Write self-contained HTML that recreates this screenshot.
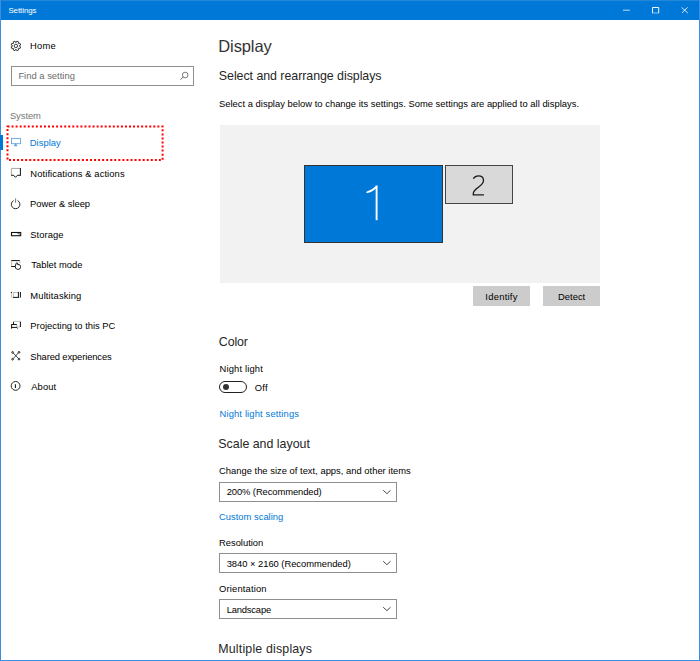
<!DOCTYPE html>
<html><head><meta charset="utf-8">
<style>
*{margin:0;padding:0;box-sizing:border-box}
html,body{width:700px;height:661px;overflow:hidden;background:#fff}
body{position:relative;font-family:"Liberation Sans",sans-serif;color:#000}
.t{position:absolute;white-space:nowrap;line-height:1;font-size:9.4px}
.h2{font-size:12.4px;color:#262626}
.lnk{color:#0078d7}
.abs{position:absolute}
#win{position:absolute;left:0;top:0;width:700px;height:661px;border:1px solid #3d8ee0;border-top:none}
#title{position:absolute;left:0;top:0;width:700px;height:20px;background:#0078d7;border-top:1px solid #2487d8}
.dd{position:absolute;left:219px;width:178px;height:20px;border:1px solid #8f8f8f}
.btn{position:absolute;top:286px;width:57px;height:20px;background:#cccccc}
svg{position:absolute;overflow:visible}
</style></head><body>
<div id="title"></div>
<div id="win"></div>
<div id="ttl" class="t" style="left:8.4px;top:6.8px;font-size:7.9px;letter-spacing:-0.05px;color:#fff">Settings</div>
<!-- window controls -->
<svg style="left:0;top:0" width="700" height="20">
  <line x1="623" y1="10.2" x2="629.8" y2="10.2" stroke="#c4def6" stroke-width="1"/>
  <path d="M652.5 13.2 V7.5 H658.7 V13.2" fill="none" stroke="#fff" stroke-width="0.95"/>
  <path d="M652.5 13 H658.7" fill="none" stroke="#9cc6ef" stroke-width="0.9"/>
  <path d="M681.6 7.4 L687.8 13 M687.6 7.4 L682 12.8" stroke="#eef6fd" stroke-width="0.9"/>
</svg>

<!-- sidebar -->
<svg style="left:0;top:0" width="200" height="400" viewBox="0 0 200 400">
  <path d="M16.19 42.41 L16.83 41.14 L18.61 41.88 L18.16 43.23 L18.57 43.64 L19.92 43.19 L20.66 44.97 L19.39 45.61 L19.39 46.19 L20.66 46.83 L19.92 48.61 L18.57 48.16 L18.16 48.57 L18.61 49.92 L16.83 50.66 L16.19 49.39 L15.61 49.39 L14.97 50.66 L13.19 49.92 L13.64 48.57 L13.23 48.16 L11.88 48.61 L11.14 46.83 L12.41 46.19 L12.41 45.61 L11.14 44.97 L11.88 43.19 L13.23 43.64 L13.64 43.23 L13.19 41.88 L14.97 41.14 L15.61 42.41 Z" fill="none" stroke="#222" stroke-width="0.9"/>
  <circle cx="15.9" cy="45.9" r="1.7" fill="none" stroke="#222" stroke-width="0.9"/>
  <!-- search -->
  <circle cx="185.2" cy="75" r="2.8" fill="none" stroke="#6a6a6a" stroke-width="0.9"/>
  <path d="M183.2 77 L180.4 79.7" stroke="#6a6a6a" stroke-width="1"/>
  <!-- red dotted box -->
  <rect x="7.5" y="126.5" width="155.1" height="33.5" fill="none" stroke="#ff0000" stroke-width="2" stroke-dasharray="2 2.05"/>
  <!-- display icon -->
  <g fill="none" stroke="#5c9fe2" stroke-width="0.85">
    <rect x="11.5" y="138.4" width="9" height="5.3"/>
    <path d="M15.6 143.8 L14.2 145.8 H17 Z" fill="#5c9fe2"/>
  </g>
  <g fill="none" stroke="#111" stroke-width="0.9">
    <path d="M11.4 168.4 H20.2 M11.4 168.6 V175" stroke="#9a9a9a" stroke-width="0.9"/>
    <path d="M20.4 168 V175.6 M11.1 175.3 H13.7 L15.5 177.3 L17.4 175.3 H20.6" stroke-width="1"/>
    <path d="M13.6 200.6 A4.3 4.3 0 1 0 17.6 200.6"/>
    <path d="M15.6 198.4 V202.8" stroke="#777" stroke-width="1"/>
    <rect x="11.5" y="232.5" width="9.2" height="3.2" stroke-width="1.1"/>
    <path d="M17.5 233.4 L20 234.2" stroke-width="0.7"/>
    <path d="M11.2 260.6 H19.8 M11.2 266.5 H15.3" stroke-width="1"/>
    <path d="M11.6 260.8 V266.2 M19.9 260.8 V263.4" stroke="#b0b0b0" stroke-width="0.8"/>
    <path d="M15.3 266.5 L16.1 263.3 Q16.8 262.5 17.6 263.1 L17.7 264.6 L19.2 264.6 Q20.5 264.9 20.5 266.4 V267.6 Q20.2 269.4 18.1 269.4 Q16.3 269.4 15.5 268 Z" stroke-width="0.95"/>
    <path d="M11.4 292.6 V297.8 M13.3 292.5 H18.3 M13.4 292.6 V297.2" stroke="#b8b8b8" stroke-width="0.9"/>
    <path d="M11.4 291.9 V293 M18.4 291.9 V297.6 M12.9 297.4 H18.9 M20.4 292 V297.6" stroke-width="1"/>
    <path d="M13.5 321.4 H20.5 M16.8 324.5 V327.4 M17 326.9 H20.4" stroke="#b5b5b5" stroke-width="0.9"/>
    <path d="M20.4 321.7 V327 M13.5 321.9 V324.4 M11.3 324.5 H16.8 M11.3 327.4 H16.9 M11.6 324.5 V328.7 M16.8 327.4 L17.6 328.6" stroke-width="1"/>
    <path d="M13.2 353 L18.4 358.4 M18.4 352.9 L13.2 358.6" stroke-width="0.8"/>
    <circle cx="12.6" cy="352.4" r="0.85"/>
    <circle cx="19" cy="352.3" r="0.85"/>
    <circle cx="12.6" cy="359.2" r="0.85"/>
    <circle cx="19" cy="359.1" r="0.85"/>
    <circle cx="15.6" cy="385.9" r="4.4"/>
    <path d="M15.4 384.3 V388" stroke-width="1.05"/>
  </g>
</svg>

<div id="home" class="t" style="left:29.98px;top:41.15px;letter-spacing:0.267px">Home</div>
<div class="abs" style="left:11px;top:66px;width:183px;height:20px;border:1px solid #8f8f8f"></div>
<div id="find" class="t" style="left:18.39px;top:71.14px;color:#6b6b6b;letter-spacing:0.018px">Find a setting</div>
<div id="system" class="t" style="left:9.91px;top:111.45px;color:#767676;letter-spacing:-0.048px">System</div>
<div class="abs" style="left:0;top:135px;width:3px;height:15px;background:#0078d7"></div>
<div id="navdisplay" class="t lnk" style="left:29.78px;top:137.70px;letter-spacing:0.040px">Display</div>
<div id="notif" class="t" style="left:30.35px;top:169.36px;letter-spacing:0.091px">Notifications &amp; actions</div>
<div id="power" class="t" style="left:30.08px;top:199.25px;letter-spacing:-0.040px">Power &amp; sleep</div>
<div id="storage" class="t" style="left:30.28px;top:230.45px;letter-spacing:0.067px">Storage</div>
<div id="tablet" class="t" style="left:31.20px;top:260.30px;letter-spacing:0.032px">Tablet mode</div>
<div id="multi" class="t" style="left:30.36px;top:290.66px;letter-spacing:0.131px">Multitasking</div>
<div id="proj" class="t" style="left:30.36px;top:321.48px;letter-spacing:0.004px">Projecting to this PC</div>
<div id="shared" class="t" style="left:30.36px;top:351.93px;letter-spacing:-0.122px">Shared experiences</div>
<div id="about" class="t" style="left:31.20px;top:381.54px;letter-spacing:0.120px">About</div>

<!-- main -->
<div id="h1" class="t" style="left:218.32px;top:38.03px;font-size:16.5px;letter-spacing:-0.120px;color:#333">Display</div>
<div id="sra" class="t h2" style="left:218.83px;top:70.05px;letter-spacing:-0.043px">Select and rearrange displays</div>
<div id="seldesc" class="t" style="left:218.98px;top:98.94px;letter-spacing:0.017px">Select a display below to change its settings. Some settings are applied to all displays.</div>
<div class="abs" style="left:220px;top:125px;width:380px;height:158px;background:#f2f2f2"></div>
<div class="abs" style="left:304px;top:165px;width:139px;height:78px;background:#0078d7;border:1px solid #333"></div>
<div class="abs" style="left:445px;top:165px;width:68px;height:39px;background:#d9d9d9;border:1px solid #444"></div>
<div class="btn" style="left:473px"></div>
<div class="btn" style="left:543px"></div>
<div id="identify" class="t" style="left:485.30px;top:292.00px;letter-spacing:0.274px">Identify</div>
<div id="detect" class="t" style="left:557.98px;top:291.65px;letter-spacing:0.032px">Detect</div>

<div id="color" class="t h2" style="left:218.83px;top:335.64px;letter-spacing:-0.120px">Color</div>
<div id="nightlight" class="t" style="left:219.49px;top:364.14px;letter-spacing:0.160px">Night light</div>
<div class="abs" style="left:219px;top:381px;width:28px;height:12px;border:1.4px solid #222;border-radius:6px"></div>
<div class="abs" style="left:222.5px;top:384px;width:6.2px;height:6.2px;background:#333;border-radius:50%"></div>
<div id="off" class="t" style="left:254.66px;top:382.57px;letter-spacing:0.360px">Off</div>
<div id="nls" class="t lnk" style="left:219.49px;top:409.22px;letter-spacing:0.152px">Night light settings</div>

<div id="sal" class="t h2" style="left:218.32px;top:437.71px;letter-spacing:-0.005px">Scale and layout</div>
<div id="change" class="t" style="left:219.00px;top:466.38px;letter-spacing:0.012px">Change the size of text, apps, and other items</div>
<div class="dd" style="top:482px"></div>
<div id="dd1" class="t" style="left:226.66px;top:487.28px;letter-spacing:-0.080px">200% (Recommended)</div>
<div id="custom" class="t lnk" style="left:219.01px;top:512.15px;letter-spacing:0.012px">Custom scaling</div>
<div id="resolution" class="t" style="left:219.01px;top:537.93px;letter-spacing:-0.009px">Resolution</div>
<div class="dd" style="top:553px"></div>
<div id="dd2" class="t" style="left:226.66px;top:558.76px;letter-spacing:-0.027px">3840 × 2160 (Recommended)</div>
<div id="orientation" class="t" style="left:219.01px;top:583.71px;letter-spacing:0.168px">Orientation</div>
<div class="dd" style="top:599px"></div>
<div id="dd3" class="t" style="left:226.66px;top:604.72px;letter-spacing:-0.170px">Landscape</div>
<div id="multiple" class="t h2" style="left:218.32px;top:642.89px;letter-spacing:0.170px">Multiple displays</div>

<svg style="left:0;top:0" width="700" height="661" viewBox="0 0 700 661">
  <path d="M367.2 192.3 Q372.8 190.8 376.5 186.6" fill="none" stroke="#fff" stroke-width="1.7" stroke-linecap="round"/><path d="M376.6 185.6 V220.2" fill="none" stroke="#fff" stroke-width="1.9"/>
  <path d="M473.3 178.6 C474.6 176.6 476.4 175.8 478.3 175.8 C481.6 175.8 483.5 177.9 483.5 180.6 C483.5 183.5 481.2 185.3 478.4 187.3 C475.4 189.4 473.3 191.2 473.3 193.6 V194.8 H483.9" fill="none" stroke="#1a1a1a" stroke-width="1.3"/>
  <g fill="none" stroke="#333" stroke-width="0.9">
    <path d="M383.2 490.2 L386.9 493.7 L390.6 490.2"/>
    <path d="M383.2 561.2 L386.9 564.7 L390.6 561.2"/>
    <path d="M383.2 607.2 L386.9 610.7 L390.6 607.2"/>
  </g>
</svg>
</body></html>
